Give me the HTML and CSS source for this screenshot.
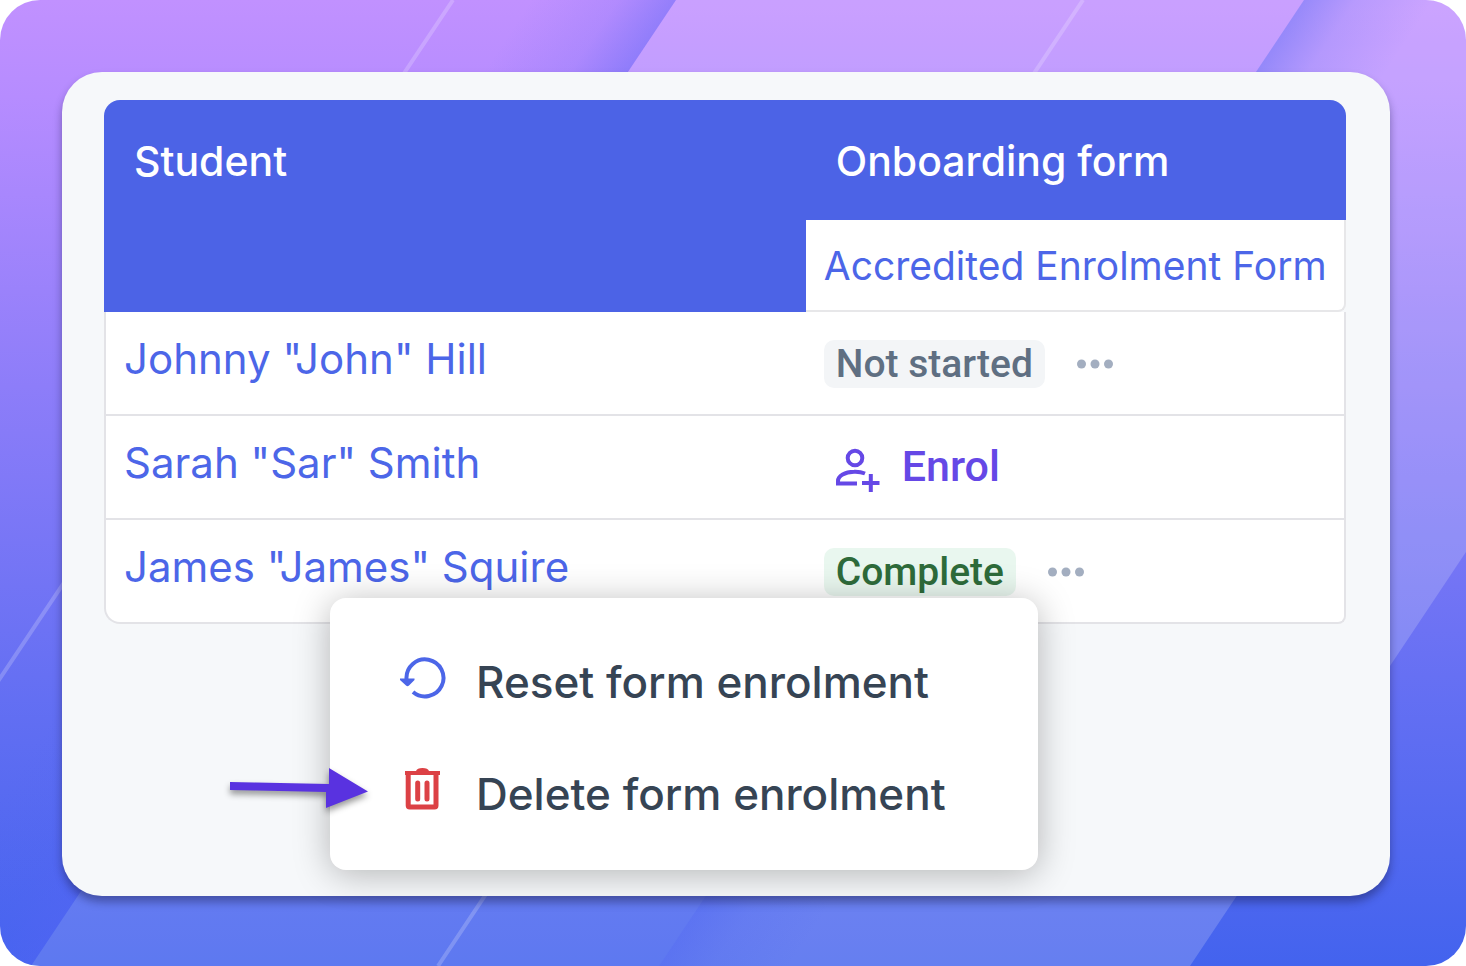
FILE: index.html
```html
<!DOCTYPE html>
<html lang="en">
<head>
<meta charset="utf-8">
<title>Student enrolments</title>
<link rel="stylesheet" href="styles.css">
</head>
<body>
<main class="stage">
  <svg class="backdrop" viewBox="0 0 1466 966" preserveAspectRatio="none" aria-hidden="true">
    <defs>
      <linearGradient id="base" x1="0" y1="0" x2="0" y2="1">
        <stop offset="0" stop-color="#c191ff"/>
        <stop offset=".1" stop-color="#b68cff"/>
        <stop offset=".4" stop-color="#8d7df9"/>
        <stop offset=".7" stop-color="#6670f3"/>
        <stop offset="1" stop-color="#4363ee"/>
      </linearGradient>
      <linearGradient id="shade-left" gradientUnits="userSpaceOnUse" x1="676" y1="0" x2="576" y2="-67">
        <stop offset="0" stop-color="#5565f5" stop-opacity=".42"/>
        <stop offset=".4" stop-color="#5565f5" stop-opacity=".14"/>
        <stop offset="1" stop-color="#5565f5" stop-opacity="0"/>
      </linearGradient>
      <linearGradient id="shade-right" gradientUnits="userSpaceOnUse" x1="1304" y1="0" x2="1394" y2="60">
        <stop offset="0" stop-color="#4a62f2" stop-opacity=".4"/>
        <stop offset=".4" stop-color="#4a62f2" stop-opacity=".15"/>
        <stop offset="1" stop-color="#4a62f2" stop-opacity="0"/>
      </linearGradient>
    </defs>
    <path fill="url(#base)" d="M0 0H1466V966H0z"/>
    <path fill="url(#shade-left)" d="M0 0H676L31 966H0z"/>
    <path fill="#fff" fill-opacity=".14" d="M676 0H1466V552L1190 966H31z"/>
    <path fill="#fff" fill-opacity=".05" d="M1304 0H1466V552L1190 966H659z"/>
    <path fill="url(#shade-right)" d="M1304 0H1466V552L1190 966H659z"/>
    <path stroke="#fff" stroke-opacity=".2" stroke-width="4" d="M453 0L-192 966M1083 0L438 966"/>
  </svg>

  <section class="card">
    <table class="roster">
      <thead>
        <tr>
          <th class="head" rowspan="2" scope="col">Student</th>
          <th class="head head-end" scope="col">Onboarding form</th>
        </tr>
        <tr>
          <th class="subhead" scope="col"><a class="link" href="#form">Accredited Enrolment Form</a></th>
        </tr>
      </thead>
      <tbody>
        <tr>
          <td class="cell name"><a class="link" href="#johnny">Johnny "John" Hill</a></td>
          <td class="cell">
            <div class="status">
              <span class="badge">Not started</span>
              <button class="more" type="button" aria-label="More options for Johnny">
                <svg viewBox="0 0 36 10" aria-hidden="true"><circle cx="4.5" cy="5" r="4.5"/><circle cx="18" cy="5" r="4.5"/><circle cx="31.5" cy="5" r="4.5"/></svg>
              </button>
            </div>
          </td>
        </tr>
        <tr>
          <td class="cell name"><a class="link" href="#sarah">Sarah "Sar" Smith</a></td>
          <td class="cell">
            <button class="enrol" type="button">
              <svg viewBox="0 0 44 44" aria-hidden="true"><circle cx="19" cy="10" r="7.3"/><path d="M29 25.5Q24 23.500 18 23.800C9 24 2 27.500 2 33V35.500H21M26 35H43.500M34.800 26V44"/></svg>
              <span>Enrol</span>
            </button>
          </td>
        </tr>
        <tr>
          <td class="cell name"><a class="link" href="#james">James "James" Squire</a></td>
          <td class="cell">
            <div class="status">
              <span class="badge badge-done">Complete</span>
              <button class="more" type="button" aria-label="More options for James">
                <svg viewBox="0 0 36 10" aria-hidden="true"><circle cx="4.5" cy="5" r="4.5"/><circle cx="18" cy="5" r="4.5"/><circle cx="31.5" cy="5" r="4.5"/></svg>
              </button>
            </div>
          </td>
        </tr>
      </tbody>
    </table>

    <div class="menu">
      <button class="item" type="button">
        <svg class="reset" viewBox="0 0 46 46" aria-hidden="true"><path class="ring" d="M6.500 24A18.500 18.500 0 1 1 13 37"/><path class="tip" d="M0 23.500H14.500V25L9 30.500Q7.500 32 6 30.500L0 25z"/></svg>
        <span>Reset form enrolment</span>
      </button>
      <button class="item" type="button">
        <svg class="trash" viewBox="0 0 46 46" aria-hidden="true"><path class="bin" d="M8.200 6.500V38.500Q8.200 40 9.700 40H34.500Q36 40 36 38.500V6.500"/><path class="bars" d="M17.700 16V32M27 16V32"/><path class="lid" d="M5 4H16Q17 1 22.500 1T29 4H40V8H5z"/></svg>
        <span>Delete form enrolment</span>
      </button>
    </div>

    <svg class="pointer" viewBox="0 0 138 44" aria-hidden="true"><path d="M0 14L99 16V0L138 23.500L96 40V24L0 22z"/></svg>
  </section>
</main>
</body>
</html>
```
FILE: styles.css
```css
* {
  box-sizing: border-box;
}

body {
  margin: 0;
  background: #fff;
  font-family: Inter, "Liberation Sans", sans-serif;
}

button {
  border: 0;
  padding: 0;
  background: none;
  color: inherit;
  font: inherit;
  cursor: pointer;
}

.stage {
  position: relative;
  display: flex;
  min-height: 100vh;
  padding: 72px 76px 70px 62px;
  border-radius: 40px;
  overflow: hidden;
}

.backdrop {
  position: absolute;
  inset: 0;
  width: 100%;
  height: 100%;
}

.card {
  position: relative;
  flex: 1;
  padding: 28px 44px 28px 42px;
  border-radius: 40px;
  background: #f6f8fa;
  box-shadow: 0 6px 8px rgba(20, 20, 60, 0.4);
}

.roster {
  width: 100%;
  border-spacing: 0;
  table-layout: fixed;
}

.head {
  width: 56.5%;
  height: 120px;
  padding: 36px 30px;
  background: #4c63e6;
  border-top-left-radius: 16px;
  color: #fff;
  font-size: 41px;
  font-weight: 500;
  line-height: 50px;
  text-align: left;
  vertical-align: top;
}

.head-end {
  width: 43.5%;
  padding-bottom: 34px;
  border-radius: 0 16px 0 0;
}

.subhead {
  height: 92px;
  padding: 0 18px;
  background: #fff;
  border: solid #e7e7e9;
  border-width: 0 2px 2px 0;
  border-bottom-right-radius: 8px;
  font-size: 39px;
  font-weight: 400;
  text-align: left;
  white-space: nowrap;
}

.link {
  color: #4c66e8;
  text-decoration: none;
}

.cell {
  height: 104px;
  padding: 2px 18px 0;
  background: #fff;
  border: solid #e3e3e7;
  border-width: 0 2px 2px 0;
}

.name {
  padding-bottom: 12px;
  border-left-width: 2px;
  border-right-width: 0;
  font-size: 42px;
}

.roster tr:last-child .name {
  border-bottom-left-radius: 16px;
}

.roster tr:last-child .cell:last-child {
  border-bottom-right-radius: 8px;
}

.status {
  display: flex;
  align-items: center;
  gap: 32px;
}

.badge {
  padding: 0 12px;
  border-radius: 10px;
  background: #f3f5f7;
  color: #5f6f82;
  font: 500 39px/48px Roboto, sans-serif;
}

.badge-done {
  background: #e9f7ef;
  color: #2e6b3a;
}

.more {
  display: flex;
}

.more svg {
  width: 36px;
  height: 10px;
  fill: #a3aec0;
}

.enrol {
  display: flex;
  align-items: center;
  gap: 22px;
  padding: 0 0 4px 12px;
  color: #6548e6;
  font: 500 43px/48px Roboto, sans-serif;
}

.enrol svg {
  width: 44px;
  height: 44px;
  margin-top: 8px;
  fill: none;
  stroke: currentColor;
  stroke-width: 4;
}

.menu {
  position: absolute;
  top: 526px;
  left: 268px;
  display: flex;
  flex-direction: column;
  gap: 64px;
  padding: 60px 70px 52px;
  width: 708px;
  border-radius: 16px;
  background: #fff;
  box-shadow: 0 4px 36px rgba(0, 0, 0, 0.28);
}

.item {
  display: flex;
  align-items: center;
  gap: 30px;
  height: 48px;
  color: #364454;
  font-size: 44px;
  font-weight: 500;
  line-height: 48px;
  white-space: nowrap;
}

.item svg {
  width: 46px;
  height: 46px;
  margin-bottom: 8px;
  flex: none;
}

.ring {
  fill: none;
  stroke: #4c66e8;
  stroke-width: 4;
}

.tip {
  fill: #4c66e8;
}

.bin,
.bars {
  fill: none;
  stroke: #dc4145;
  stroke-width: 5;
}

.bars {
  stroke-linecap: round;
}

.lid {
  fill: #dc4145;
}

.pointer {
  position: absolute;
  top: 696px;
  left: 168px;
  width: 138px;
  height: 44px;
  overflow: visible;
  fill: #5932e0;
  filter: drop-shadow(0 4px 3px rgba(0, 0, 0, 0.4));
}
```
